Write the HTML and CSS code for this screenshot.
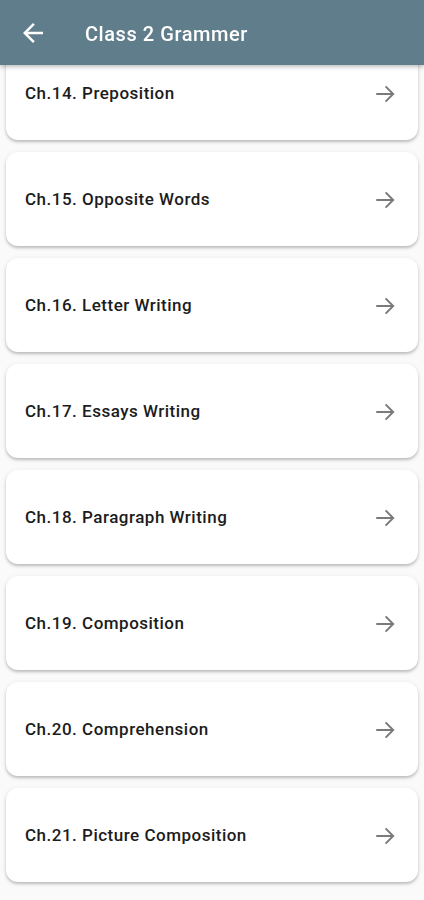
FILE: index.html
```html
<!DOCTYPE html>
<html lang="en">
<head>
<meta charset="utf-8">
<title>Class 2 Grammer</title>
<link rel="stylesheet" href="styles.css">
</head>
<body>
<header class="appbar">
  <svg class="back" viewBox="4 4 16 16" aria-hidden="true"><path d="M20 11H7.83l5.59-5.59L12 4l-8 8 8 8 1.41-1.41L7.83 13H20v-2z" fill="#fff"/></svg>
  <h1 class="title">Class 2 Grammer</h1>
</header>
<main class="list">
  <div class="card"><span class="label">Ch.14. Preposition</span><svg class="arrow" viewBox="0 0 24 24"><path d="M4.5 12h14.5M12.5 5.5L19 12l-6.5 6.5"/></svg></div>
  <div class="card"><span class="label">Ch.15. Opposite Words</span><svg class="arrow" viewBox="0 0 24 24"><path d="M4.5 12h14.5M12.5 5.5L19 12l-6.5 6.5"/></svg></div>
  <div class="card"><span class="label">Ch.16. Letter Writing</span><svg class="arrow" viewBox="0 0 24 24"><path d="M4.5 12h14.5M12.5 5.5L19 12l-6.5 6.5"/></svg></div>
  <div class="card"><span class="label">Ch.17. Essays Writing</span><svg class="arrow" viewBox="0 0 24 24"><path d="M4.5 12h14.5M12.5 5.5L19 12l-6.5 6.5"/></svg></div>
  <div class="card"><span class="label">Ch.18. Paragraph Writing</span><svg class="arrow" viewBox="0 0 24 24"><path d="M4.5 12h14.5M12.5 5.5L19 12l-6.5 6.5"/></svg></div>
  <div class="card"><span class="label">Ch.19. Composition</span><svg class="arrow" viewBox="0 0 24 24"><path d="M4.5 12h14.5M12.5 5.5L19 12l-6.5 6.5"/></svg></div>
  <div class="card"><span class="label">Ch.20. Comprehension</span><svg class="arrow" viewBox="0 0 24 24"><path d="M4.5 12h14.5M12.5 5.5L19 12l-6.5 6.5"/></svg></div>
  <div class="card"><span class="label">Ch.21. Picture Composition</span><svg class="arrow" viewBox="0 0 24 24"><path d="M4.5 12h14.5M12.5 5.5L19 12l-6.5 6.5"/></svg></div>
</main>
</body>
</html>
```
FILE: styles.css
```css
html, body {
  margin: 0;
  padding: 0;
  background: #fafafa;
  font-family: Roboto, "Noto Sans", sans-serif;
}
body {
  height: 900px;
  overflow: hidden;
}
.appbar {
  position: fixed;
  top: 0;
  left: 0;
  right: 0;
  height: 65px;
  background: #607d8b;
  display: flex;
  align-items: center;
  box-shadow: 0 2px 4px rgba(0,0,0,0.25);
  z-index: 2;
}
.back {
  width: 20px;
  height: 20px;
  margin-left: 23px;
  margin-top: 1px;
}
.title {
  margin: 2px 0 0 42px;
  color: #fff;
  font-size: 20px;
  font-weight: 500;
  letter-spacing: 0.55px;
}
.list {
  display: flex;
  flex-direction: column;
  gap: 12px;
  padding: 46px 6px 0;
}
.card {
  height: 94px;
  background: #fff;
  border-radius: 12px;
  box-shadow: 0 2px 3px rgba(0,0,0,0.22), 0 1px 6px rgba(0,0,0,0.06);
  display: flex;
  align-items: center;
  justify-content: space-between;
  padding: 0 19px;
  box-sizing: border-box;
}
.label {
  font-size: 17px;
  font-weight: 500;
  color: #1c1c1c;
  letter-spacing: 0.5px;
}
.arrow {
  width: 28px;
  height: 28px;
  fill: none;
  stroke: #7a7a7a;
  stroke-width: 1.7;
  margin-top: 1px;
}
```
